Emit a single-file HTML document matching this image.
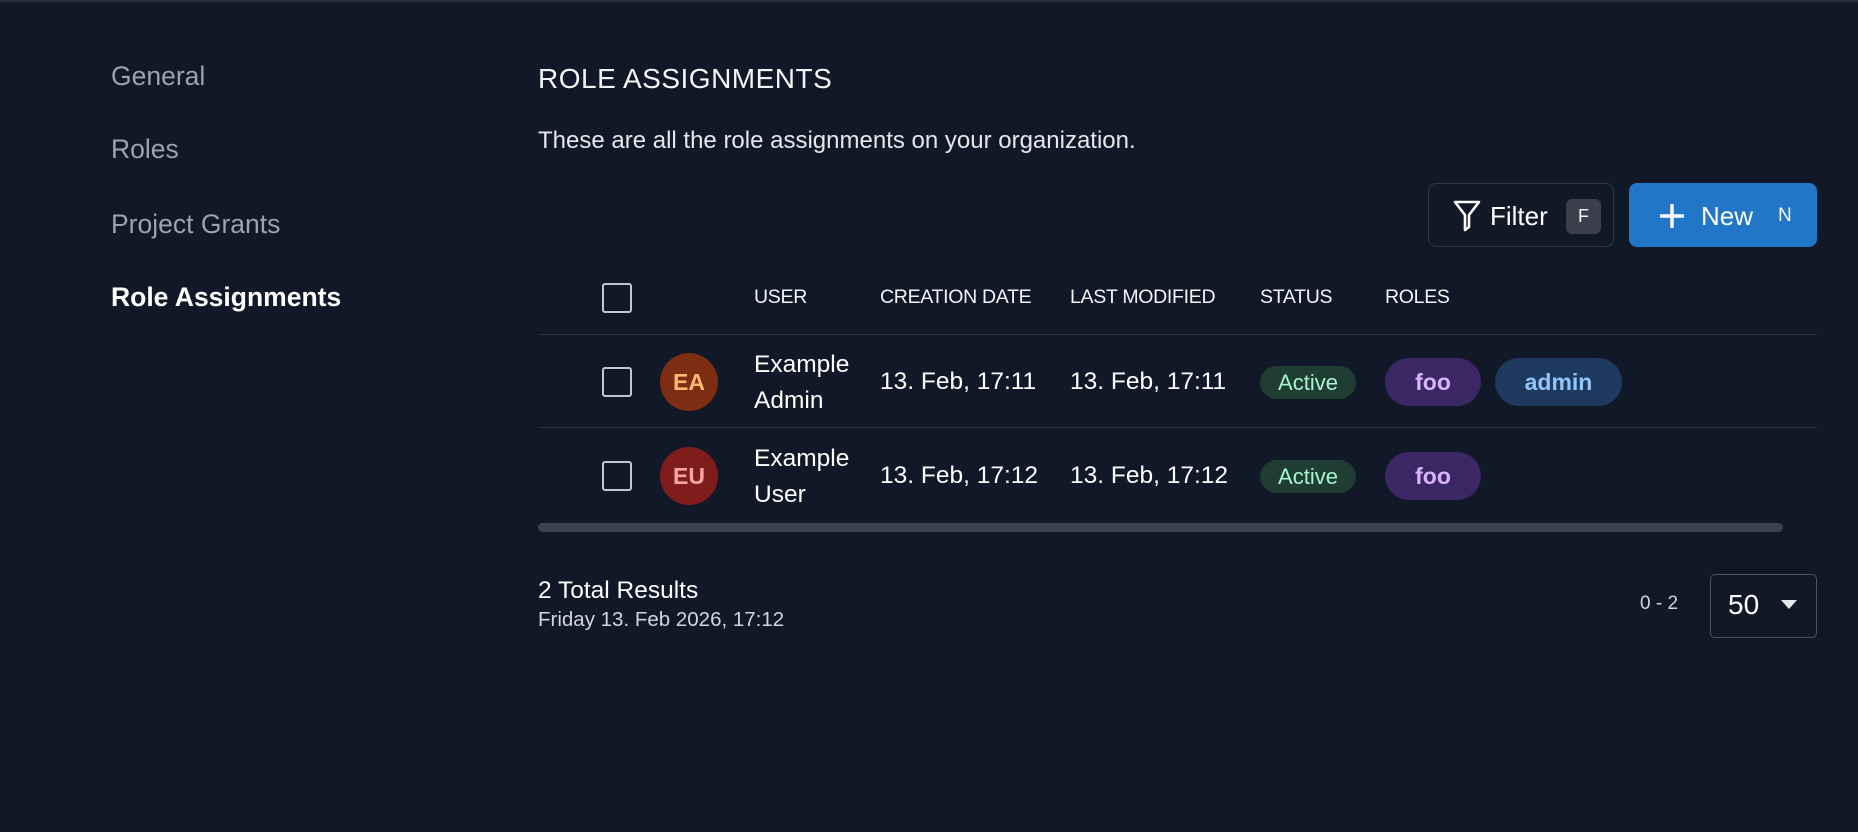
<!DOCTYPE html>
<html><head><style>
*{box-sizing:border-box;margin:0;padding:0}
body{width:1858px;height:832px;background:#111827;font-family:"Liberation Sans",sans-serif;color:#f3f4f6;position:relative;overflow:hidden;border-top:2px solid #2a2f3a}
.a{position:absolute;white-space:nowrap}
.side{font-size:26.5px;color:#9ca3af;left:111px}
.cb{position:absolute;width:30px;height:30px;border:2.5px solid #c4c8ce;border-radius:3px}
.hd{font-size:19.5px;color:#f3f4f6;top:284px;letter-spacing:-0.3px}
.cell{font-size:24.5px;color:#fff}
.line{position:absolute;left:538px;width:1279px;height:1px;background:#2b3240}
.pill{position:absolute;display:flex;align-items:center;justify-content:center;font-weight:bold;font-size:23px;border-radius:24px}
.av{position:absolute;width:58px;height:58px;border-radius:50%;display:flex;align-items:center;justify-content:center;font-weight:bold;font-size:23px}
</style></head><body>
<div class="a side" style="top:59px">General</div>
<div class="a side" style="top:132px">Roles</div>
<div class="a side" style="top:207px">Project Grants</div>
<div class="a side" style="top:280px;color:#fff;font-weight:bold">Role Assignments</div>

<div class="a" style="left:538px;top:61px;font-size:28px;letter-spacing:0.5px">ROLE ASSIGNMENTS</div>
<div class="a" style="left:538px;top:125px;font-size:24px;color:#e5e7eb">These are all the role assignments on your organization.</div>

<div class="a" style="left:1428px;top:181px;width:186px;height:64px;border:1px solid #303644;border-radius:8px"></div>
<svg class="a" style="left:1452px;top:197px" width="30" height="34" viewBox="0 0 30 34"><path d="M3 3H27L17 16V28L13 31V16Z" fill="none" stroke="#fff" stroke-width="2.6" stroke-linejoin="round"/></svg>
<div class="a" style="left:1490px;top:199px;font-size:26px;color:#fff">Filter</div>
<div class="a" style="left:1566px;top:197px;width:35px;height:35px;background:#3a3f4b;border-radius:6px;font-size:18px;display:flex;align-items:center;justify-content:center">F</div>

<div class="a" style="left:1629px;top:181px;width:188px;height:64px;background:#2176c7;border-radius:8px"></div>
<svg class="a" style="left:1658px;top:200px" width="28" height="28" viewBox="0 0 28 28"><path d="M14 2V26M2 14H26" stroke="#fff" stroke-width="3.5"/></svg>
<div class="a" style="left:1701px;top:199px;font-size:26px;color:#fff">New</div>
<div class="a" style="left:1778px;top:203px;font-size:19px;color:#fff">N</div>

<div class="cb" style="left:602px;top:281px"></div>
<div class="a hd" style="left:754px">USER</div>
<div class="a hd" style="left:880px">CREATION DATE</div>
<div class="a hd" style="left:1070px">LAST MODIFIED</div>
<div class="a hd" style="left:1260px">STATUS</div>
<div class="a hd" style="left:1385px">ROLES</div>
<div class="line" style="top:332px"></div>
<div class="line" style="top:425px"></div>

<div class="cb" style="left:602px;top:365px"></div>
<div class="av" style="left:660px;top:351px;background:#7c2d12;color:#fdba74">EA</div>
<div class="a cell" style="left:754px;top:345px;line-height:36px">Example<br>Admin</div>
<div class="a cell" style="left:880px;top:366px">13. Feb, 17:11</div>
<div class="a cell" style="left:1070px;top:366px">13. Feb, 17:11</div>
<div class="pill" style="left:1260px;top:364px;width:96px;height:33px;background:#1f3d33;color:#a7f3d0;font-weight:normal;font-size:22px">Active</div>
<div class="pill" style="left:1385px;top:356px;width:96px;height:48px;background:#3b2763;color:#d8b4fe">foo</div>
<div class="pill" style="left:1495px;top:356px;width:127px;height:48px;background:#1e3a5f;color:#93c5fd">admin</div>

<div class="cb" style="left:602px;top:459px"></div>
<div class="av" style="left:660px;top:445px;background:#7f1d1d;color:#fca5a5">EU</div>
<div class="a cell" style="left:754px;top:439px;line-height:36px">Example<br>User</div>
<div class="a cell" style="left:880px;top:460px">13. Feb, 17:12</div>
<div class="a cell" style="left:1070px;top:460px">13. Feb, 17:12</div>
<div class="pill" style="left:1260px;top:458px;width:96px;height:33px;background:#1f3d33;color:#a7f3d0;font-weight:normal;font-size:22px">Active</div>
<div class="pill" style="left:1385px;top:450px;width:96px;height:48px;background:#3b2763;color:#d8b4fe">foo</div>

<div class="a" style="left:538px;top:521px;width:1245px;height:9px;background:#3b424f;border-radius:5px"></div>

<div class="a" style="left:538px;top:575px;font-size:24.5px;color:#fff">2 Total Results</div>
<div class="a" style="left:538px;top:606px;font-size:20.5px;color:#d1d5db">Friday 13. Feb 2026, 17:12</div>
<div class="a" style="left:1640px;top:591px;font-size:19px;color:#d1d5db">0 - 2</div>
<div class="a" style="left:1710px;top:572px;width:107px;height:64px;border:1px solid #4b5260;border-radius:5px"></div>
<div class="a" style="left:1728px;top:587px;font-size:28px;color:#fff">50</div>
<svg class="a" style="left:1781px;top:598px" width="16" height="10"><path d="M0 0H16L8 9Z" fill="#e5e7eb"/></svg>
</body></html>
